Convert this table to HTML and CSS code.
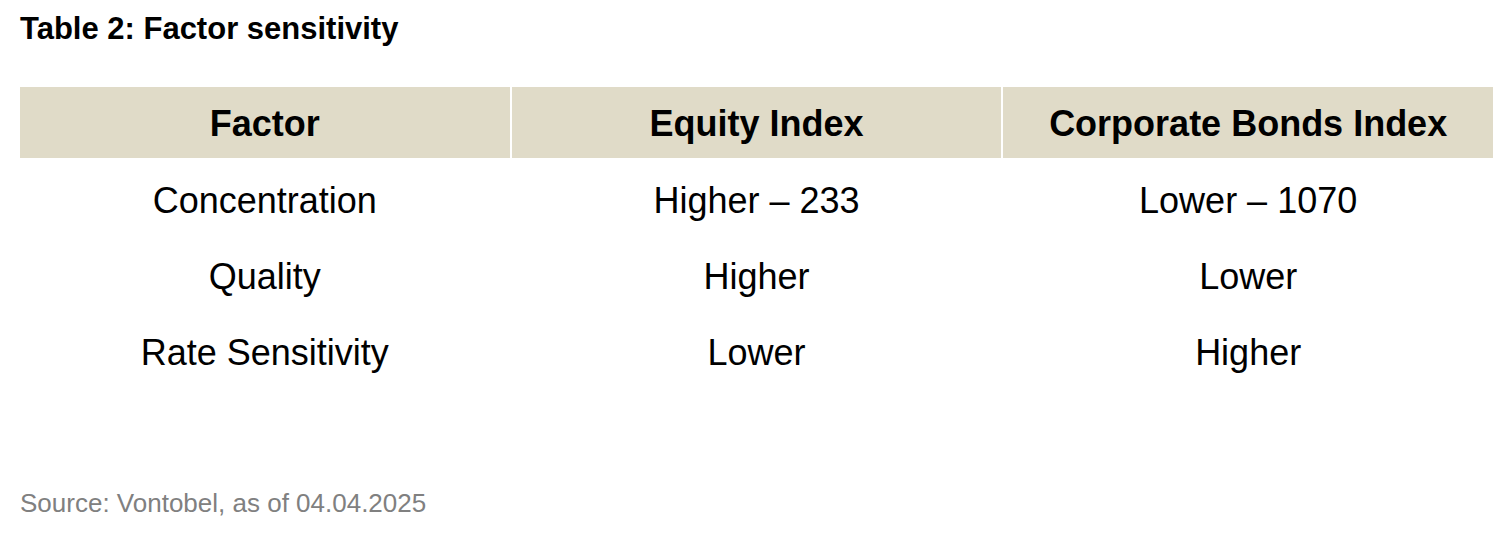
FILE: index.html
```html
<!DOCTYPE html>
<html>
<head>
<meta charset="utf-8">
<link rel="stylesheet" href="styles.css">
</head>
<body>
<div class="page">
  <h1 class="title">Table 2: Factor sensitivity</h1>
  <div class="grid">
    <div class="row head"><div>Factor</div><div>Equity Index</div><div>Corporate Bonds Index</div></div>
    <div class="body">
      <div class="row"><div>Concentration</div><div>Higher – 233</div><div>Lower – 1070</div></div>
      <div class="row"><div>Quality</div><div>Higher</div><div>Lower</div></div>
      <div class="row"><div>Rate Sensitivity</div><div>Lower</div><div>Higher</div></div>
    </div>
  </div>
  <p class="source">Source: Vontobel, as of 04.04.2025</p>
</div>
</body>
</html>
```

FILE: styles.css
```css
html, body { margin: 0; padding: 0; background: #fff; }
body { font-family: "Liberation Sans", Arial, sans-serif; color: #000; }
.page { padding: 11px 0 0 20px; width: 1473px; }
.title { margin: 0; font-size: 31px; font-weight: bold; line-height: 36px; }
.grid { margin-top: 40px; }
.row { display: grid; grid-template-columns: repeat(3, 1fr); column-gap: 2px; }
.row > div { display: flex; align-items: center; justify-content: center; height: 76px; font-size: 36px; }
.head > div { background: #e0dbc8; height: 71px; font-weight: bold; padding-top: 3px; box-sizing: border-box; }
.body { padding-top: 5px; }
.source { margin: 97px 0 0 0; font-size: 26px; line-height: 30px; color: #808080; }
```
